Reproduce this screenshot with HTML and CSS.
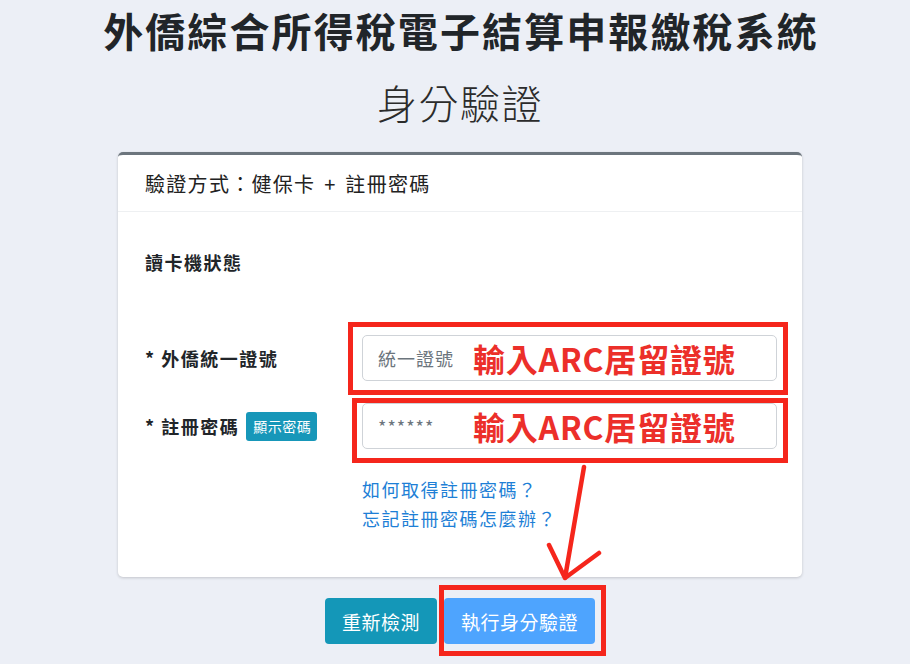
FILE: index.html
```html
<!DOCTYPE html>
<html lang="zh-Hant">
<head>
<meta charset="utf-8">
<title>身分驗證</title>
<link rel="stylesheet" href="styles.css">
</head>
<body>
<div class="page">
  <h1 class="title">外僑綜合所得稅電子結算申報繳稅系統</h1>
  <h2 class="subtitle">身分驗證</h2>
  <div class="card">
    <div class="card-header">驗證方式：健保卡 + 註冊密碼</div>
    <div class="card-body">
      <div class="status">讀卡機狀態</div>
      <div class="row row-first">
        <label class="label">* 外僑統一證號</label>
        <div class="field">
          <input class="input" type="text" placeholder="統一證號">
          <span class="note">輸入ARC居留證號</span>
        </div>
      </div>
      <div class="row row-second">
        <label class="label">* 註冊密碼 <span class="badge">顯示密碼</span></label>
        <div class="field">
          <input class="input" type="password" placeholder="******">
          <span class="note">輸入ARC居留證號</span>
        </div>
      </div>
      <div class="links">
        <a class="link" href="#">如何取得註冊密碼？</a>
        <a class="link" href="#">忘記註冊密碼怎麼辦？</a>
      </div>
    </div>
  </div>
  <div class="actions">
    <button class="btn btn-info">重新檢測</button>
    <button class="btn btn-primary">執行身分驗證</button>
  </div>
</div>
<div class="mark mark-1"></div>
<div class="mark mark-2"></div>
<div class="mark mark-3"></div>
<svg class="arrow" width="910" height="664" viewBox="0 0 910 664">
  <path d="M584 467 L565 578 M549 545 L565 578 L599 553" fill="none" stroke="#f5261c" stroke-width="4.5" stroke-linecap="round" stroke-linejoin="round"/>
</svg>
</body>
</html>
```
FILE: styles.css
```css
html, body {
  margin: 0;
  padding: 0;
}
body {
  background: #eceff6;
  font-family: "Noto Sans CJK TC", "Noto Sans", "Liberation Sans", sans-serif;
  color: #212529;
  width: 910px;
  height: 664px;
  overflow: hidden;
  position: relative;
}
.page {
  padding-left: 10px;
  width: 900px;
}
.title {
  margin: 0;
  text-align: center;
  font-size: 40px;
  line-height: 60px;
  font-weight: 700;
  letter-spacing: 2.1px;
  padding-left: 2px;
  color: #212529;
}
.subtitle {
  margin: 12px 0 0;
  text-align: center;
  font-size: 40px;
  line-height: 60px;
  font-weight: 300;
  letter-spacing: 1.5px;
  color: #2b2b2b;
}
.card {
  width: 684px;
  margin: 20px auto 0;
  background: #fff;
  border-top: 3px solid #6c757d;
  border-radius: 5px;
  box-shadow: 0 1px 3px rgba(0, 0, 0, 0.18);
  box-sizing: border-box;
}
.card-header {
  height: 57px;
  box-sizing: border-box;
  border-bottom: 1px solid #eef0f2;
  padding-left: 27px;
  display: flex;
  align-items: center;
  font-size: 20px;
  letter-spacing: 1.3px;
  word-spacing: 3px;
  color: #222;
}
.card-body {
  padding: 35px 25px 44px 27px;
}
.status {
  font-size: 18px;
  font-weight: 700;
  line-height: 30px;
  letter-spacing: 1.5px;
}
.row {
  display: flex;
  align-items: center;
}
.row-first {
  margin-top: 58px;
}
.row-second {
  margin-top: 22px;
}
.label {
  width: 217px;
  flex: none;
  font-size: 18px;
  font-weight: 700;
  letter-spacing: 1.5px;
  display: flex;
  align-items: center;
}
.badge {
  margin-left: 7px;
  background: #1797b9;
  color: #fff;
  font-size: 14px;
  font-weight: 400;
  letter-spacing: 0.5px;
  border-radius: 3px;
  height: 29px;
  padding: 0 6px 0 7px;
  display: inline-flex;
  align-items: center;
}
.field {
  flex: 1;
  position: relative;
}
.input {
  width: 100%;
  height: 46px;
  box-sizing: border-box;
  border: 1px solid #cfd3d8;
  border-radius: 5px;
  padding: 0 15px;
  font-family: inherit;
  font-size: 18px;
  letter-spacing: 1px;
  background: #fff;
}
.input::placeholder {
  color: #6c757d;
}
.note {
  position: absolute;
  left: 111px;
  top: 50%;
  transform: translateY(-50%);
  color: #ec2f2a;
  font-size: 32px;
  font-weight: 700;
  letter-spacing: 0.8px;
  line-height: 1;
  white-space: nowrap;
  pointer-events: none;
}
.links {
  margin: 26px 0 0 217px;
  display: flex;
  flex-direction: column;
}
.link {
  color: #1e7fd6;
  text-decoration: none;
  font-size: 18px;
  line-height: 29px;
  letter-spacing: 1.5px;
}
.actions {
  display: flex;
  justify-content: center;
  gap: 7px;
  margin-top: 21px;
}
.btn {
  height: 46px;
  border: none;
  border-radius: 4px;
  color: #fff;
  font-family: inherit;
  font-size: 19px;
  letter-spacing: 0.5px;
  padding: 0;
}
.btn-info {
  background: #1497b8;
  width: 112px;
}
.btn-primary {
  background: #4ea4fe;
  width: 151px;
}
.mark {
  position: absolute;
  border: 5px solid #f5261c;
  box-sizing: border-box;
}
.mark-1 {
  left: 348px;
  top: 322px;
  width: 440px;
  height: 73px;
}
.mark-2 {
  left: 352px;
  top: 398px;
  width: 436px;
  height: 65px;
}
.mark-3 {
  left: 439px;
  top: 585px;
  width: 167px;
  height: 71px;
}
.arrow {
  position: absolute;
  left: 0;
  top: 0;
  pointer-events: none;
}
```
